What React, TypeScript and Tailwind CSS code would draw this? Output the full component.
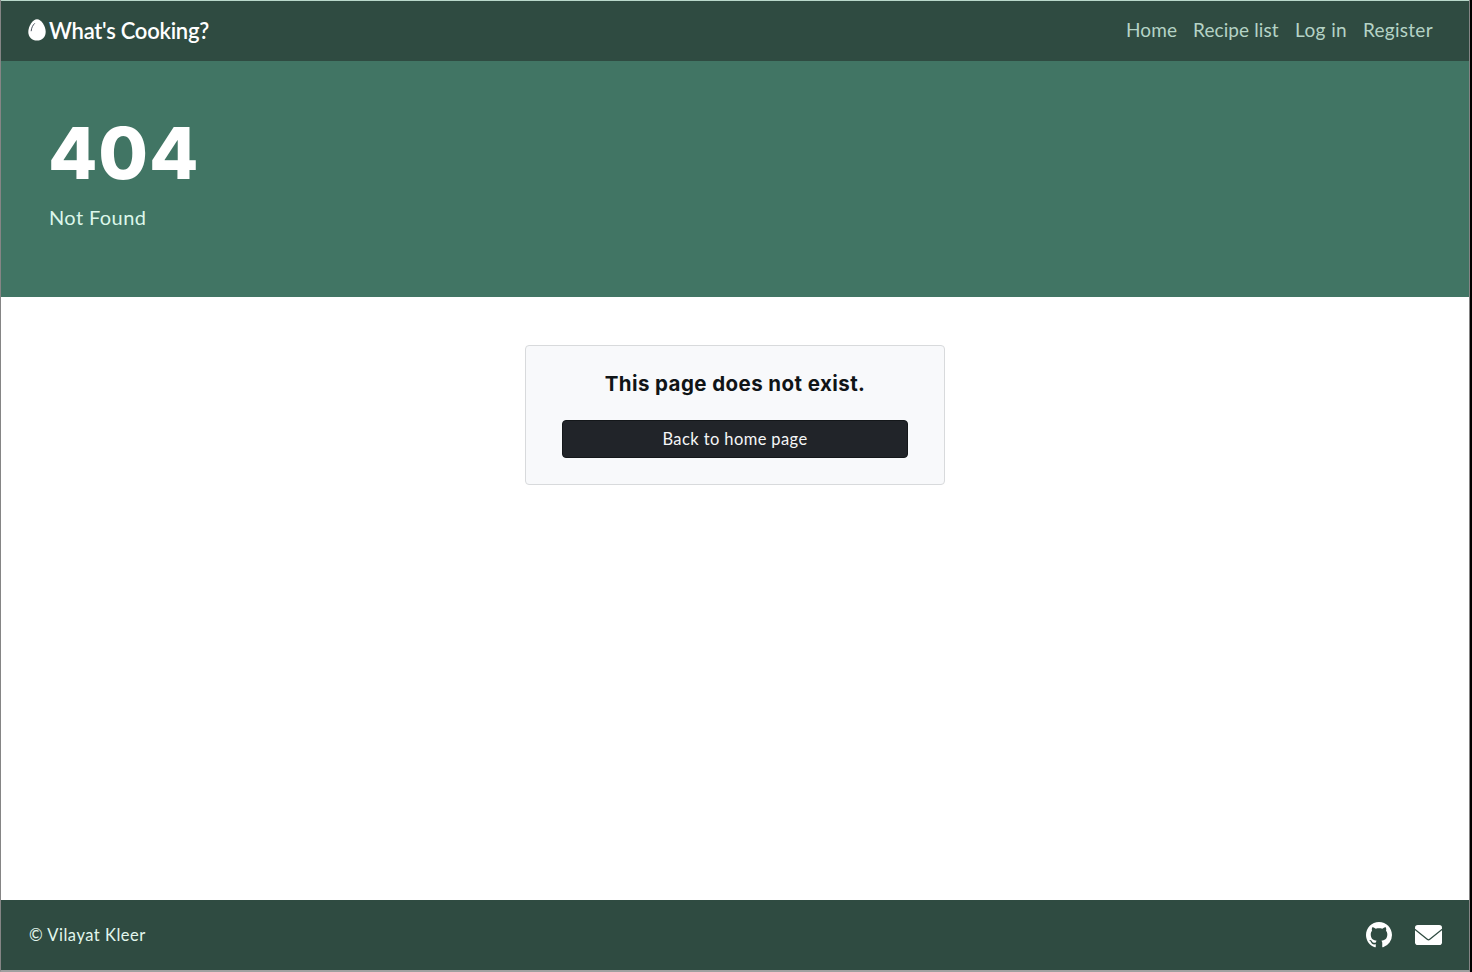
import { BsGithub } from "react-icons/bs";

function EggIcon() {
  return (
    <svg viewBox="0 0 18 22" className="mb-0.5 h-[22px] w-[18px]" aria-hidden="true">
      <path d="M9 0.2C4.6 0.2 0.3 7.2 0.3 13C0.3 18 4.1 21.6 9 21.6S17.7 18 17.7 13C17.7 7.2 13.4 0.2 9 0.2Z" fill="#fff" />
      <path d="M3.2 11.8C3.5 8.8 4.7 6.2 6.5 4.6" fill="none" stroke="#4c5561" strokeWidth="1" strokeLinecap="round" />
    </svg>
  );
}

function MailIcon() {
  return (
    <svg viewBox="0 0 27 20" className="h-5 w-[27px]" aria-hidden="true">
      <rect width="27" height="20" rx="2.8" fill="#fff" />
      <path d="M-0.3 4.3L12.2 14.3Q13.5 15.3 14.8 14.3L27.3 4.3" fill="none" stroke="#2f4b41" strokeWidth="1.3" />
    </svg>
  );
}

const links = [
  { label: "Home", style: "w-[51px] tracking-[0.1px]" },
  { label: "Recipe list", style: "w-[86px] tracking-[0.1px]" },
  { label: "Log in", style: "w-[52px] tracking-[0.4px]" },
  { label: "Register", style: "w-[70px] tracking-[0.27px]" },
];

export default function App() {
  return (
    <div className="h-[972px] w-[1472px] overflow-hidden border-r-2 border-black bg-white font-['Lato',sans-serif]">
      <div className="flex h-full flex-col border-x border-b-2 border-x-[#858585] border-b-[#a0a0a0]">
        <header className="flex h-[61px] items-center justify-between border-t border-[#b9d8ca] bg-[#2f4b41] pr-[36px] pl-[27px]">
          <a className="flex items-center gap-[3px]">
            <EggIcon />
            <span className="text-[22px] leading-[30px] font-semibold tracking-[-0.26px] whitespace-nowrap text-white">What's Cooking?</span>
          </a>
          <nav className="flex gap-4 pb-0.5 text-[19px] leading-[28px] text-[#b5d3c6]">
            {links.map((l) => (
              <a key={l.label} className={`whitespace-nowrap ${l.style}`}>{l.label}</a>
            ))}
          </nav>
        </header>
        <section className="h-[236px] bg-[#417564] pt-[48px] pl-[47px]">
          <h1 className="font-['Inter',sans-serif] text-[72px] leading-[88px] font-extrabold tracking-[0.8px] text-white">404</h1>
          <p className="mt-[5px] pl-px text-[20px] leading-[30px] tracking-[0.4px] text-[#dcf7ea]">Not Found</p>
        </section>
        <main className="flex flex-1 items-start justify-center pt-12">
          <div className="h-[140px] w-[420px] rounded border border-[#d8dadc] bg-[#f8f9fb] px-9 pt-[25px] text-center">
            <h2 className="font-['Inter',sans-serif] text-[20.5px] leading-[26px] font-bold tracking-[0.42px] whitespace-nowrap text-[#101417]">This page does not exist.</h2>
            <button className="mt-[23px] block h-[38px] w-full rounded border border-[#14171a] bg-[#212429] text-[16.5px] tracking-[0.4px] text-[#f5f6f7]">Back to home page</button>
          </div>
        </main>
        <footer className="flex h-[70px] items-center justify-between bg-[#2f4b41] pr-[27px] pl-7">
          <p className="text-[16.5px] leading-6 tracking-[0.5px] text-[#e2f7ed]">© Vilayat Kleer</p>
          <div className="flex items-center gap-[23px] text-white">
            <BsGithub className="size-[26px]" />
            <MailIcon />
          </div>
        </footer>
      </div>
    </div>
  );
}
